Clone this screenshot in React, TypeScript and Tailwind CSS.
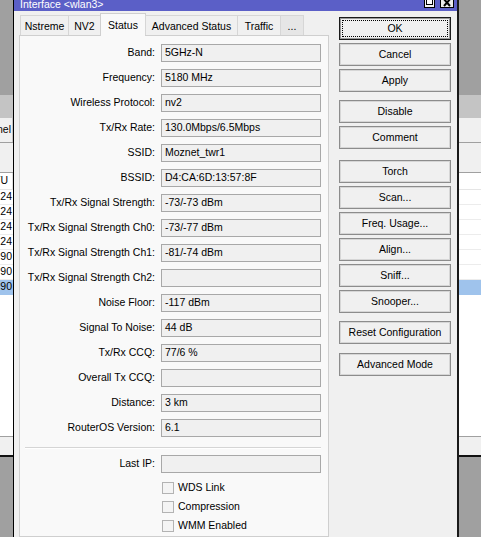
import React from "react";

const FONT = "font-['Liberation_Sans',Arial,sans-serif]";

const fields: [string, string][] = [
  ["Band:", "5GHz-N"],
  ["Frequency:", "5180 MHz"],
  ["Wireless Protocol:", "nv2"],
  ["Tx/Rx Rate:", "130.0Mbps/6.5Mbps"],
  ["SSID:", "Moznet_twr1"],
  ["BSSID:", "D4:CA:6D:13:57:8F"],
  ["Tx/Rx Signal Strength:", "-73/-73 dBm"],
  ["Tx/Rx Signal Strength Ch0:", "-73/-77 dBm"],
  ["Tx/Rx Signal Strength Ch1:", "-81/-74 dBm"],
  ["Tx/Rx Signal Strength Ch2:", ""],
  ["Noise Floor:", "-117 dBm"],
  ["Signal To Noise:", "44 dB"],
  ["Tx/Rx CCQ:", "77/6 %"],
  ["Overall Tx CCQ:", ""],
  ["Distance:", "3 km"],
  ["RouterOS Version:", "6.1"],
];

const rows = ["24", "24", "24", "24", "90", "90", "90"];

function BgSliver({ left }: { left: boolean }) {
  return (
    <div className="flex flex-col h-full w-full">
      <div className="h-[95px] bg-[#a0a0a0] shrink-0" />
      <div className="h-[23px] bg-[#c4c4c4] shrink-0" />
      <div className="h-[25px] bg-[#f0f0f0] border-b border-[#a0a0a0] shrink-0 flex items-center justify-end overflow-hidden">
        {left && (
          <div className="h-full flex items-center justify-end border-r border-[#c8c8c8] pr-[1px] w-[13px] overflow-hidden">
            <span className="whitespace-nowrap">Channel</span>
          </div>
        )}
      </div>
      <div className="h-[30px] bg-[#f0f0f0] border-b border-[#a0a0a0] shrink-0" />
      <div className="h-[17px] bg-white border-b border-[#e5e5e5] shrink-0 flex items-center justify-end overflow-hidden">
        {left && (
          <div className="h-full flex items-center justify-end border-r border-[#e0e0e0] pr-[4px] w-[13px] overflow-hidden">
            <span className="whitespace-nowrap">MTU</span>
          </div>
        )}
      </div>
      {rows.map((r, i) => (
        <div
          key={i}
          className={`h-[15px] shrink-0 flex items-center justify-end pr-[1px] overflow-hidden ${
            i === rows.length - 1 ? "bg-[#9fc3ec] border-b border-[#9fc3ec]" : "bg-white border-b border-[#ececec]"
          }`}
        >
          {left && <span className="whitespace-nowrap">{r}</span>}
        </div>
      ))}
      <div className="h-[142px] bg-white border-b border-[#a0a0a0] shrink-0" />
      <div className="h-[18px] bg-[#f0f0f0] shrink-0" />
      <div className="h-[2px] bg-[#111] shrink-0" />
      <div className="flex-1 bg-[#a0a0a0]" />
    </div>
  );
}

function TitleBar() {
  return (
    <div className="h-[11px] bg-[#5b5fc7] flex justify-between shrink-0 overflow-hidden">
      <div className="pl-[6px] mt-[-1px] h-[11px] leading-[11px] text-[10.5px] text-white whitespace-nowrap">
        Interface &lt;wlan3&gt;
      </div>
      <div className="flex items-start mr-[3px]">
        <div className="w-[11px] h-[8px] bg-[#f4f4f4] border border-t-0 border-black flex items-start justify-center">
          <div className="w-[7px] h-[5px] border border-t-0 border-black bg-white" />
        </div>
        <div className="ml-[5px] w-[14px] h-[8px] bg-[#ececec] border border-t-0 border-black">
          <svg width="12" height="7" viewBox="0 0 12 7" className="block">
            <path d="M2 -2 L9 6 M10 -2 L3 6" stroke="#000" strokeWidth="2" />
          </svg>
        </div>
      </div>
    </div>
  );
}

const tabs: { name: string; w: string; sel?: boolean; dim?: boolean }[] = [
  { name: "Nstreme", w: "w-[49px]" },
  { name: "NV2", w: "w-[33px]" },
  { name: "Status", w: "w-[46px]", sel: true },
  { name: "Advanced Status", w: "w-[93px]" },
  { name: "Traffic", w: "w-[44px]" },
  { name: "...", w: "w-[24px]", dim: true },
];

function Tabs() {
  return (
    <div className="h-[24px] flex items-end pl-[1px] relative z-10 shrink-0">
      {tabs.map((t, i) =>
        t.sel ? (
          <div
            key={t.name}
            className={`${t.w} ml-[-1px] h-[23px] mb-[-1px] bg-[#f9f9f9] border border-b-0 border-[#cfcfcf] flex items-center justify-center pt-[1px] whitespace-nowrap`}
          >
            {t.name}
          </div>
        ) : (
          <div
            key={t.name}
            className={`${t.w} ${i === 0 ? "" : "ml-[-1px]"} h-[20px] ${
              t.dim ? "bg-[#e6e6e6]" : "bg-[#f0f0f0]"
            } border border-b-0 border-[#d6d6d6] flex items-center justify-center pt-[2px] whitespace-nowrap`}
          >
            {t.name}
          </div>
        )
      )}
    </div>
  );
}

function Field({ label, value }: { label: string; value: string }) {
  return (
    <div className="flex items-center h-[18px]">
      <div className="w-[136px] text-right whitespace-nowrap pr-[1px]">{label}</div>
      <div className="ml-[5px] w-[160px] h-[18px] border border-[#a8a8a8] bg-[#f0f0f0] pl-[3px] flex items-center whitespace-nowrap overflow-hidden">
        {value}
      </div>
    </div>
  );
}

function Check({ label }: { label: string }) {
  return (
    <div className="h-[19px] flex items-center">
      <div className="ml-[142px] w-[12px] h-[12px] border border-[#b3b3b3] bg-[#f4f4f4]" />
      <div className="ml-[4px] whitespace-nowrap">{label}</div>
    </div>
  );
}

function Btn({ label, mt, def }: { label: string; mt: string; def?: boolean }) {
  if (def) {
    return (
      <div className={`${mt} h-[23px] w-[112px] shrink-0 border border-[#1a1a1a] bg-[#f0f0f0] p-[2px] shadow-[inset_0_0_0_1px_#9a9a9a]`}>
        <div className="w-full h-full border border-dotted border-black flex items-center justify-center whitespace-nowrap">
          {label}
        </div>
      </div>
    );
  }
  return (
    <div
      className={`${mt} h-[23px] w-[112px] shrink-0 border border-[#8c8c8c] bg-[#f0f0f0] shadow-[inset_0_0_0_1px_#d6d6d6] flex items-center justify-center whitespace-nowrap`}
    >
      {label}
    </div>
  );
}

export default function App() {
  return (
    <div className={`${FONT} text-[10.5px] text-black w-[481px] h-[537px] overflow-hidden flex bg-[#a0a0a0]`}>
      <div className="w-[13px] h-full shrink-0 overflow-hidden">
        <BgSliver left />
      </div>
      <div className="w-[446px] h-full shrink-0 flex flex-col bg-[#f0f0f0] border-l border-black border-r-2 border-r-[#1a1a1a] overflow-hidden">
        <TitleBar />
        <div className="flex flex-1 pl-[5px]">
          <div className="w-[310px] flex flex-col shrink-0">
            <Tabs />
            <div className="flex-1 bg-[#f9f9f9] border border-[#cfcfcf] flex flex-col pt-[8px]">
              <div className="flex flex-col gap-[7px]">
                {fields.map(([l, v]) => (
                  <Field key={l} label={l} value={v} />
                ))}
              </div>
              <div className="mt-[10px] ml-[5px] w-[296px] h-[2px] border-t border-[#d5d5d5] border-b border-b-white" />
              <div className="mt-[6px]">
                <Field label="Last IP:" value="" />
              </div>
              <div className="mt-[5px] flex flex-col">
                <Check label="WDS Link" />
                <Check label="Compression" />
                <Check label="WMM Enabled" />
              </div>
            </div>
          </div>
          <div className="ml-[10px] flex flex-col w-[112px] shrink-0">
            <Btn label="OK" mt="mt-[6px]" def />
            <Btn label="Cancel" mt="mt-[3px]" />
            <Btn label="Apply" mt="mt-[3px]" />
            <Btn label="Disable" mt="mt-[8px]" />
            <Btn label="Comment" mt="mt-[3px]" />
            <Btn label="Torch" mt="mt-[11px]" />
            <Btn label="Scan..." mt="mt-[3px]" />
            <Btn label="Freq. Usage..." mt="mt-[3px]" />
            <Btn label="Align..." mt="mt-[3px]" />
            <Btn label="Sniff..." mt="mt-[3px]" />
            <Btn label="Snooper..." mt="mt-[3px]" />
            <Btn label="Reset Configuration" mt="mt-[8px]" />
            <Btn label="Advanced Mode" mt="mt-[9px]" />
          </div>
        </div>
      </div>
      <div className="flex-1 h-full overflow-hidden">
        <BgSliver left={false} />
      </div>
    </div>
  );
}
